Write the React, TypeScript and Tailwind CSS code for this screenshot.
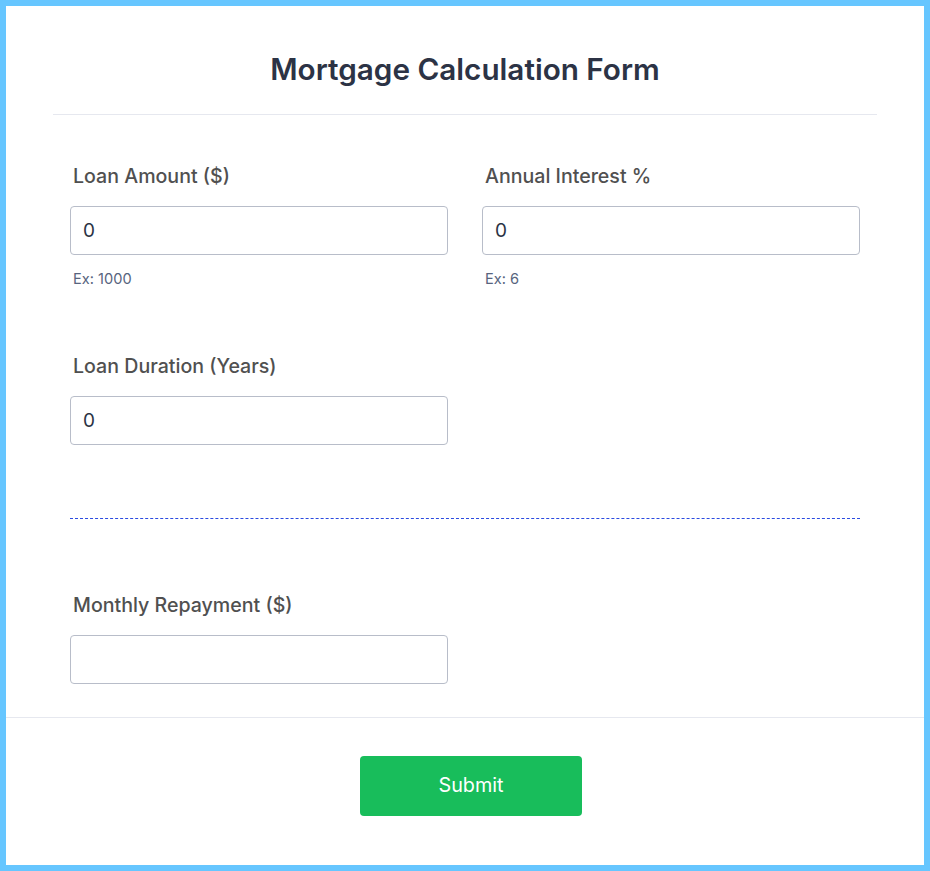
import { useState } from "react";

type FieldProps = {
  label: string;
  value: string;
  hint?: string;
  onChange?: (value: string) => void;
};

function Field({ label, value, hint, onChange }: FieldProps) {
  return (
    <div className="flex flex-col px-[17px]">
      <label className="ml-[3px] pt-[1px] text-[19.6px] font-medium leading-[22px] text-[#505050]">{label}</label>
      <input
        type="text"
        value={value}
        onChange={(event) => onChange?.(event.target.value)}
        className="mt-[19px] h-[49px] w-full rounded-[4px] border border-[#b8bdc9] bg-white px-[12px] text-[19px] text-[#2c3345] focus:outline-none"
      />
      {hint && <p className="ml-[3px] mt-[16px] text-[14.6px] leading-[16px] text-[#57647e]">{hint}</p>}
    </div>
  );
}

export default function App() {
  const [loanAmount, setLoanAmount] = useState("0");
  const [interest, setInterest] = useState("0");
  const [years, setYears] = useState("0");

  return (
    <div className="h-[871px] w-[930px] bg-[#66c6ff] p-[6px] font-['Inter',sans-serif]">
      <div className="flex h-full flex-col bg-white">
        <div className="mx-[47px] border-b border-[#e6e8ef] pb-[28px] pt-[46px]">
          <h1 className="text-center text-[29.7px] font-semibold leading-[34px] text-[#2c3345]">Mortgage Calculation Form</h1>
        </div>

        <div className="grid grid-cols-2 px-[47px] pt-[49px]">
          <Field label="Loan Amount ($)" value={loanAmount} hint="Ex: 1000" onChange={setLoanAmount} />
          <Field label="Annual Interest %" value={interest} hint="Ex: 6" onChange={setInterest} />
        </div>

        <div className="grid grid-cols-2 px-[47px] pt-[67px]">
          <Field label="Loan Duration (Years)" value={years} onChange={setYears} />
        </div>

        <div className="mx-[64px] mt-[73px] border-t border-dashed border-[#2b4be0]" />

        <div className="grid grid-cols-2 px-[47px] pt-[74px]">
          <Field label="Monthly Repayment ($)" value="" />
        </div>

        <div className="mt-[33px] flex justify-center border-t border-[#e6e8ef] pl-[12px] pt-[38px]">
          <button
            type="button"
            className="h-[60px] w-[222px] rounded-[4px] bg-[#18bd5b] text-[19.8px] text-white"
          >
            Submit
          </button>
        </div>
      </div>
    </div>
  );
}
